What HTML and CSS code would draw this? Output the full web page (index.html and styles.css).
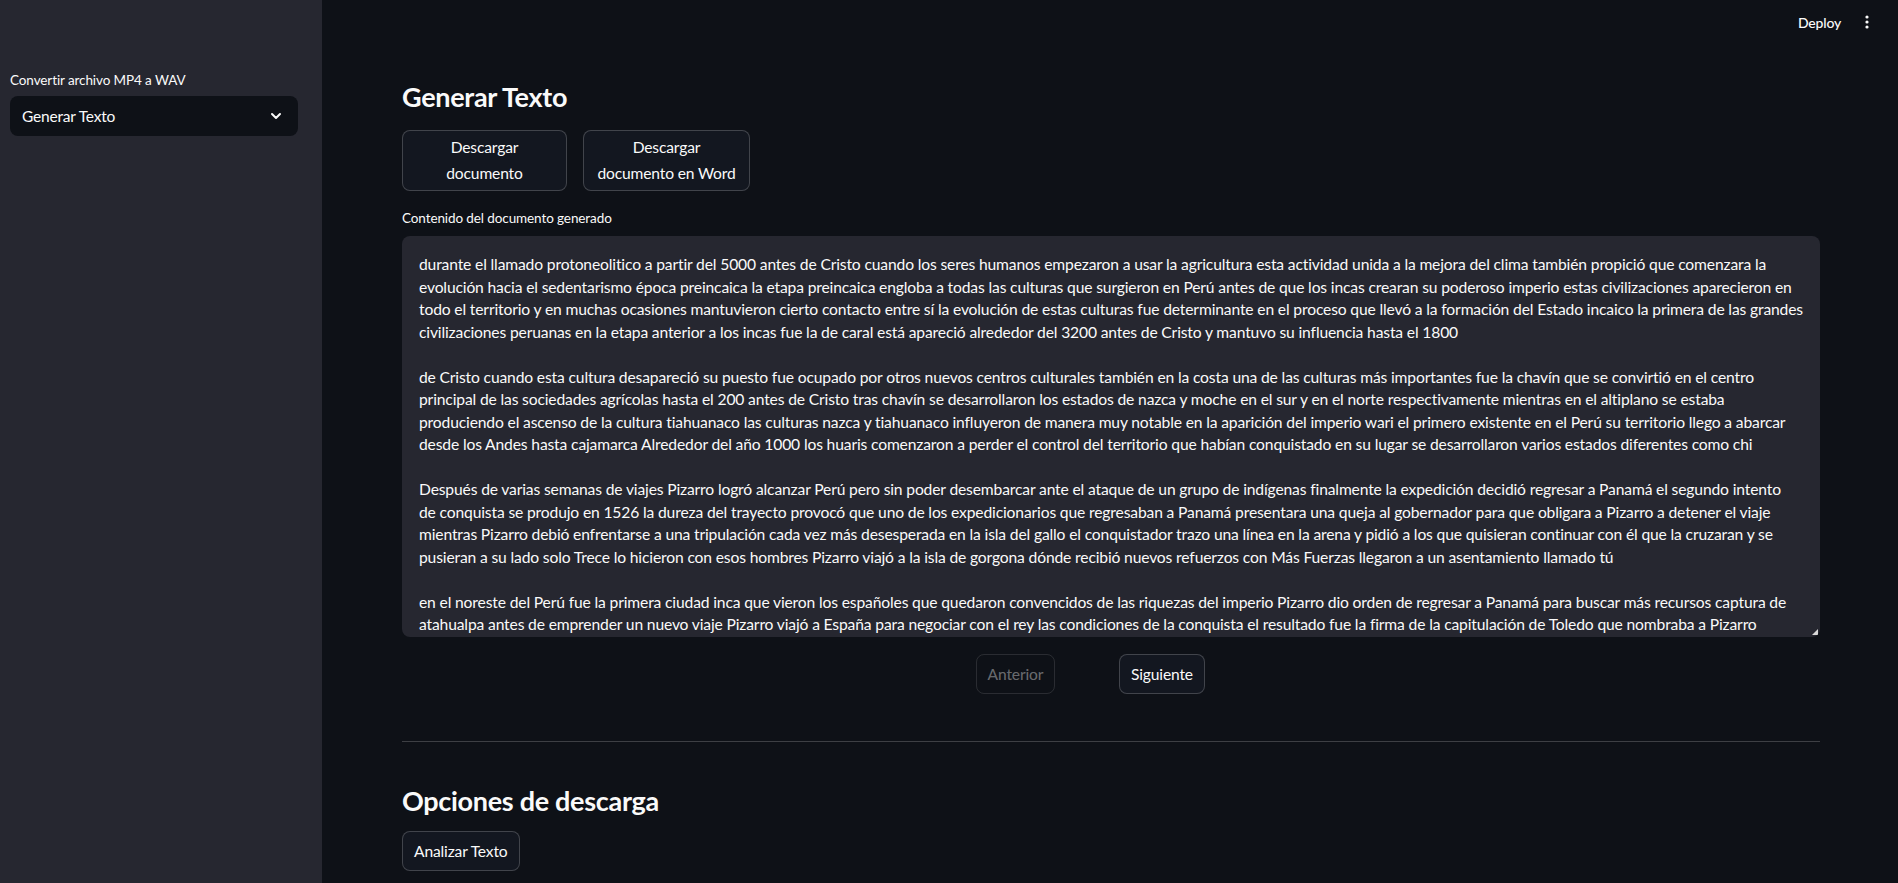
FILE: index.html
```html
<!DOCTYPE html>
<html lang="es">
<head>
<meta charset="utf-8">
<title>Generar Texto</title>
<link rel="stylesheet" href="styles.css">
</head>
<body>
<div class="app">
  <aside class="sidebar">
    <div class="sb-content">
      <div class="sb-label">Convertir archivo MP4 a WAV</div>
      <div class="select">
        <span class="select-value">Generar Texto</span>
        <svg class="chevron" width="16" height="16" viewBox="0 0 16 16" aria-hidden="true"><path d="M4 6l4 4 4-4" fill="none" stroke="#fafafa" stroke-width="2" stroke-linecap="round" stroke-linejoin="round"/></svg>
      </div>
    </div>
  </aside>
  <div class="main">
    <header class="topbar">
      <span class="deploy">Deploy</span>
      <svg class="kebab" width="16" height="16" viewBox="0 0 16 16" aria-hidden="true"><circle cx="8" cy="3" r="1.6" fill="#fafafa"/><circle cx="8" cy="8" r="1.6" fill="#fafafa"/><circle cx="8" cy="13" r="1.6" fill="#fafafa"/></svg>
    </header>
    <section class="block">
      <h3 class="title">Generar Texto</h3>
      <div class="btn-row">
        <button class="btn btn-two w1">Descargar<br>documento</button>
        <button class="btn btn-two w2">Descargar<br>documento en Word</button>
      </div>
      <div class="field-label">Contenido del documento generado</div>
      <div class="textarea">
        <div class="ta-text">durante el llamado protoneolitico a partir del 5000 antes de Cristo cuando los seres humanos empezaron a usar la agricultura esta actividad unida a la mejora del clima también propició que comenzara la
evolución hacia el sedentarismo época preincaica la etapa preincaica engloba a todas las culturas que surgieron en Perú antes de que los incas crearan su poderoso imperio estas civilizaciones aparecieron en
todo el territorio y en muchas ocasiones mantuvieron cierto contacto entre sí la evolución de estas culturas fue determinante en el proceso que llevó a la formación del Estado incaico la primera de las grandes
civilizaciones peruanas en la etapa anterior a los incas fue la de caral está apareció alrededor del 3200 antes de Cristo y mantuvo su influencia hasta el 1800

de Cristo cuando esta cultura desapareció su puesto fue ocupado por otros nuevos centros culturales también en la costa una de las culturas más importantes fue la chavín que se convirtió en el centro
principal de las sociedades agrícolas hasta el 200 antes de Cristo tras chavín se desarrollaron los estados de nazca y moche en el sur y en el norte respectivamente mientras en el altiplano se estaba
produciendo el ascenso de la cultura tiahuanaco las culturas nazca y tiahuanaco influyeron de manera muy notable en la aparición del imperio wari el primero existente en el Perú su territorio llego a abarcar
desde los Andes hasta cajamarca Alrededor del año 1000 los huaris comenzaron a perder el control del territorio que habían conquistado en su lugar se desarrollaron varios estados diferentes como chi

Después de varias semanas de viajes Pizarro logró alcanzar Perú pero sin poder desembarcar ante el ataque de un grupo de indígenas finalmente la expedición decidió regresar a Panamá el segundo intento
de conquista se produjo en 1526 la dureza del trayecto provocó que uno de los expedicionarios que regresaban a Panamá presentara una queja al gobernador para que obligara a Pizarro a detener el viaje
mientras Pizarro debió enfrentarse a una tripulación cada vez más desesperada en la isla del gallo el conquistador trazo una línea en la arena y pidió a los que quisieran continuar con él que la cruzaran y se
pusieran a su lado solo Trece lo hicieron con esos hombres Pizarro viajó a la isla de gorgona dónde recibió nuevos refuerzos con Más Fuerzas llegaron a un asentamiento llamado tú

en el noreste del Perú fue la primera ciudad inca que vieron los españoles que quedaron convencidos de las riquezas del imperio Pizarro dio orden de regresar a Panamá para buscar más recursos captura de
atahualpa antes de emprender un nuevo viaje Pizarro viajó a España para negociar con el rey las condiciones de la conquista el resultado fue la firma de la capitulación de Toledo que nombraba a Pizarro</div>
        <span class="resize-grip"></span>
      </div>
      <div class="pager">
        <div class="col col-5"><button class="btn btn-one" disabled>Anterior</button></div>
        <div class="col col-6"><button class="btn btn-one">Siguiente</button></div>
      </div>
      <hr class="divider">
      <h3 class="title title-2">Opciones de descarga</h3>
      <button class="btn btn-one">Analizar Texto</button>
    </section>
  </div>
</div>
</body>
</html>
```

FILE: styles.css
```css
* { box-sizing: border-box; }
html, body { margin: 0; padding: 0; }
body {
  background: #0e1117;
  color: #fafafa;
  font-family: "Source Sans Pro", Lato, "Liberation Sans", sans-serif;
  font-size: 16px;
  overflow: hidden;
}
.app {
  display: flex;
  width: 1898px;
  height: 883px;
}
.sidebar {
  width: 322px;
  flex: 0 0 322px;
  background: #262730;
  height: 100%;
}
.sb-content {
  padding: 71px 24px 0 10px;
}
.sb-label {
  font-size: 13.5px;
  line-height: 18px;
  letter-spacing: -0.1px;
  margin-bottom: 7px;
}
.select {
  height: 40px;
  background: #0e1117;
  border-radius: 8px;
  display: flex;
  align-items: center;
  justify-content: space-between;
  padding: 0 12px 0 12px;
}
.select-value {
  font-size: 15.5px;
  letter-spacing: -0.2px;
}
.chevron { display: block; margin-right: 2px; }
.main {
  flex: 1;
  display: flex;
  flex-direction: column;
  min-width: 0;
}
.topbar {
  height: 44px;
  display: flex;
  align-items: center;
  justify-content: flex-end;
  padding-right: 23px;
  gap: 18px;
}
.deploy {
  font-size: 14px;
  font-weight: 500;
  letter-spacing: -0.2px;
}
.kebab { display: block; }
.block {
  padding: 36px 78px 0 80px;
  display: flex;
  flex-direction: column;
  align-items: flex-start;
}
.title {
  margin: 0;
  font-size: 27px;
  font-weight: 700;
  line-height: 34px;
  letter-spacing: -0.3px;
}
.btn-row {
  display: flex;
  gap: 16px;
  margin-top: 16px;
}
.btn {
  font-family: inherit;
  color: #fafafa;
  background: #131720;
  border: 1px solid rgba(250, 250, 250, 0.2);
  border-radius: 8px;
  font-size: 15.6px;
  letter-spacing: -0.15px;
  cursor: pointer;
}
.btn-two {
  line-height: 25.6px;
  padding: 4px 10px;
  text-align: center;
}
.w1 { width: 165px; }
.w2 { width: 167px; }
.btn-one {
  height: 40px;
  padding: 0 11px;
  line-height: 38px;
}
.btn[disabled] {
  color: rgba(250, 250, 250, 0.4);
  background: transparent;
  border-color: rgba(250, 250, 250, 0.12);
  cursor: not-allowed;
}
.field-label {
  margin-top: 16px;
  font-size: 13.5px;
  line-height: 22px;
  letter-spacing: -0.1px;
  margin-bottom: 7px;
}
.textarea {
  position: relative;
  align-self: stretch;
  height: 401px;
  background: #262730;
  border-radius: 8px;
  overflow: hidden;
  padding: 17px 17px;
}
.ta-text {
  white-space: pre;
  font-size: 15.65px;
  line-height: 22.5px;
  letter-spacing: -0.15px;
}
.resize-grip {
  position: absolute;
  right: 2px;
  bottom: 2px;
  width: 0;
  height: 0;
  border-left: 6px solid transparent;
  border-bottom: 6px solid #d8d8d8;
}
.pager {
  align-self: stretch;
  display: grid;
  grid-template-columns: repeat(10, 1fr);
  column-gap: 16px;
  margin-top: 17px;
}
.col-5 { grid-column: 5; }
.col-6 { grid-column: 6; }
.divider {
  align-self: stretch;
  border: none;
  border-top: 1px solid rgba(250, 250, 250, 0.2);
  margin: 47px 0 0 0;
}
.title-2 {
  margin-top: 42px;
  margin-bottom: 13px;
}
```
